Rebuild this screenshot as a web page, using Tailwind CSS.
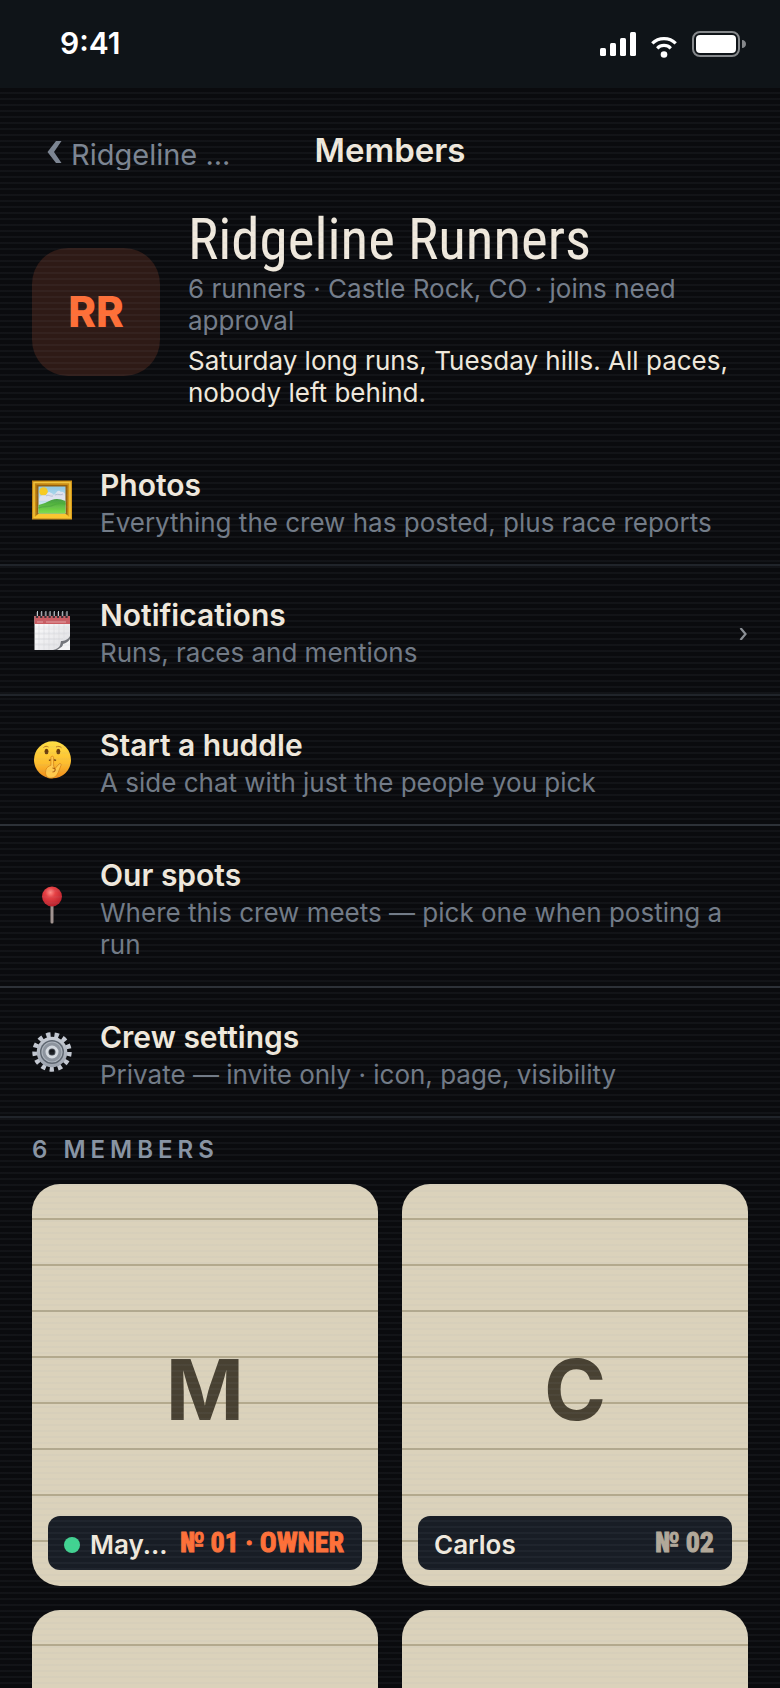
<!DOCTYPE html>
<html lang="en">
<head>
<meta charset="utf-8">
<meta name="viewport" content="width=device-width, initial-scale=1">
<title>Members</title>
<script src="https://cdn.jsdelivr.net/npm/@tailwindcss/browser@4"></script>
</head>
<body class="flex h-screen flex-col overflow-hidden bg-[#0a0b0e] font-['Inter',sans-serif] text-[#f0e9dd]">

<div class="flex h-[88px] shrink-0 items-center justify-between bg-[#0f1418] pl-[60px] pr-[34px] text-white">
  <span class="pb-0.5 text-[30px] font-semibold leading-9">9:41</span>
  <svg class="h-7 w-[146px]" viewBox="0 0 146 28" fill="none" aria-label="Signal, Wi-Fi and battery">
    <g fill="#fff">
      <rect x="0" y="18" width="6" height="8" rx="1.5"/>
      <rect x="10" y="13" width="6" height="13" rx="1.5"/>
      <rect x="20" y="8" width="6" height="18" rx="1.5"/>
      <rect x="30" y="2" width="6" height="24" rx="1.5"/>
      <circle cx="64" cy="24.5" r="3.3"/>
    </g>
    <path d="M52.3 13.4C58.5 7 69.500 7 75.700 13.400M57.200 18.300C61 14.500 67 14.500 70.800 18.300" stroke="#fff" stroke-width="3.200"/>
    <rect x="93" y="2" width="46" height="24" rx="7" stroke="#85888b" stroke-width="2"/>
    <rect x="96" y="5" width="40" height="18" rx="4" fill="#fff"/>
    <path d="M142 10c2.500 0 4 2 4 4s-1.500 4-4 4z" fill="#85888b"/>
  </svg>
</div>

<div class="relative min-h-0 flex-1">
  <div class="h-full overflow-y-auto [scrollbar-width:none]">

    <nav class="grid grid-cols-[1fr_auto_1fr] items-center px-11 pt-[42px]">
      <a href="#" class="flex h-10 w-[200px] items-end gap-2 text-[#7c8592]">
        <svg class="mb-[7px] ml-[3px] h-[22px] w-4 shrink-0" viewBox="0 0 16 22" fill="currentColor" aria-hidden="true"><path d="M9 0h5.500L7 11l7.500 11H9L.500 11z"/></svg>
        <span class="h-8 overflow-hidden text-[29px] leading-[34px]">Ridgeline ...</span>
      </a>
      <h1 class="text-[33px] font-semibold leading-10">Members</h1>
    </nav>

    <header class="flex items-center gap-7 px-8 pb-[27px] pt-10">
      <div class="mt-1 flex size-32 shrink-0 items-center justify-center rounded-[36px] bg-[#2e1a16] text-[42px] font-extrabold text-[#ff6f37]">RR</div>
      <div class="min-w-0 flex-1">
        <h2 class="mb-[3px] font-['Roboto_Condensed','Liberation_Sans',sans-serif] text-[57px] leading-[60px]">Ridgeline Runners</h2>
        <p class="text-[26px] leading-8 text-[#747d8a]">6 runners · Castle Rock, CO · joins need approval</p>
        <p class="mt-2 text-[26px] leading-8">Saturday long runs, Tuesday hills. All paces, nobody left behind.</p>
      </div>
    </header>

    <ul>
      <li>
        <a href="#" class="flex items-center gap-7 border-b-2 border-[#20242a] px-8 py-[25px]">
          <svg class="size-10 shrink-0" viewBox="0 0 40 40" aria-hidden="true">
            <defs>
              <linearGradient id="sky" x2="0" y2="1"><stop stop-color="#8fc9e6"/><stop offset="1" stop-color="#eef4f6"/></linearGradient>
              <linearGradient id="grass" x2="0" y2="1"><stop stop-color="#3f9d3c"/><stop offset="1" stop-color="#7fe04b"/></linearGradient>
              <linearGradient id="gold" x2="1" y2="1"><stop stop-color="#b97c10"/><stop offset="1" stop-color="#e0a019"/></linearGradient>
            </defs>
            <rect y=".5" width="40" height="39" fill="url(#gold)"/>
            <rect x="2" y="2.500" width="36" height="35" fill="none" stroke="#f5c63a" stroke-width="1.500"/>
            <rect x="4.500" y="5" width="31" height="30" fill="#94600f"/>
            <path d="M2 38 6 34h28l4 4z" fill="#f9c630"/>
            <rect x="6.500" y="6.500" width="27" height="27" fill="url(#sky)"/>
            <circle cx="11.500" cy="11.500" r="4.300" fill="#f7cb22"/>
            <path d="M8 17c2-3 5-1 6-2s2-5 5-2c2 0 2 3 4 1s3-5 6-2c2-1 3 1 4 2v7H7z" fill="#dfe3ef"/>
            <path d="M14 16c3-2 4 1 7 0M23 15c3-2 5 1 8-1" stroke="#b9c0d8" fill="none"/>
            <path d="M6.500 25c5-1 8-3 13-5 5-2 9-1 14 1v12.500h-27z" fill="url(#grass)"/>
            <path d="M6.500 28c6-3 11 0 15-3 4-2 8-2 12-1" stroke="#4fae3e" stroke-width="1.300" fill="none"/>
          </svg>
          <span class="min-w-0 flex-1 pt-1">
            <span class="block text-[30px] font-semibold leading-10">Photos</span>
            <span class="mt-0.5 block text-[26px] leading-8 text-[#717a86]">Everything the crew has posted, plus race reports</span>
          </span>
        </a>
      </li>
      <li>
        <a href="#" class="flex items-center gap-7 border-b-2 border-[#20242a] px-8 py-[25px]">
          <svg class="size-10 shrink-0" viewBox="0 0 40 40" aria-hidden="true">
            <defs><linearGradient id="paper" x2="1" y2="1"><stop stop-color="#fff"/><stop offset="1" stop-color="#dedee2"/></linearGradient></defs>
            <path d="M2.500 6H38v34H2.500z" fill="url(#paper)"/>
            <path d="M2.500 6H38v8H2.500z" fill="#c95c62"/>
            <path d="M5 12h6M14 12h20" stroke="#e7a1a3" stroke-width="1.200"/>
            <path d="M7 14v26M12 14v26M17 14v26M22 14v24M27 14v20M32 14v14M3 19h34M3 24h32M3 29h28M3 34h22" stroke="#dddde0" stroke-width=".7"/>
            <path d="M21 40c8-2 7-5 8-9 3 0 7-1 9-5v14z" fill="#74767b"/>
            <path d="M25 40c5-3 6-4 6-6 3-1 5-2 7-5v11z" fill="#f4f4f5"/>
            <path d="M5 2v6M9.200 2v6M13.400 2v6M17.600 2v6M21.800 2v6M26 2v6M30.200 2v6M34.500 2v6" stroke="#3d343a" stroke-width="2.200"/>
            <path d="M5.500 1v5M9.700 1v5M13.900 1v5M18.100 1v5M22.300 1v5M26.500 1v5M30.700 1v5M35 1v5" stroke="#bdc9cd"/>
          </svg>
          <span class="min-w-0 flex-1 pt-1">
            <span class="block text-[30px] font-semibold leading-10">Notifications</span>
            <span class="mt-0.5 block text-[26px] leading-8 text-[#717a86]">Runs, races and mentions</span>
          </span>
          <svg class="mt-2 h-3 w-[10px] shrink-0" viewBox="0 0 10 12" fill="none" aria-hidden="true"><path d="m2.500 0 5 6-5 6" stroke="#8b8f95" stroke-width="2.200"/></svg>
        </a>
      </li>
      <li>
        <a href="#" class="flex items-center gap-7 border-b-2 border-[#262a30] px-8 py-[25px]">
          <svg class="size-10 shrink-0" viewBox="0 0 40 40" aria-hidden="true">
            <defs><linearGradient id="face" x2="0" y2="1"><stop stop-color="#ffdf45"/><stop offset=".6" stop-color="#fdbd2e"/><stop offset="1" stop-color="#ef8b1b"/></linearGradient></defs>
            <circle cx="20.500" cy="19.800" r="18.500" fill="url(#face)"/>
            <ellipse cx="14.500" cy="11.500" rx="2" ry="2.700" fill="#6b3d0c"/>
            <ellipse cx="26.300" cy="11.500" rx="2" ry="2.700" fill="#6b3d0c"/>
            <path d="M11.500 7.500c1.500-1.500 3.500-1.500 5-.5M24 7c2-1 4-.8 5.500.8" stroke="#c07a18" fill="none"/>
            <path d="M17 20.500c1-1 6-1 7 0" stroke="#7a430c" stroke-width="1.300" fill="none"/>
            <path d="M18.900 17.500c0-1.800 2.700-1.800 2.700 0V26l1.400 2.500 4-4.500c1.300-1.200 2.600 0 2 1.300l-3 7.700c-2 4-5 5.500-8.500 5-4-.5-4.500-5-3.500-8.500.5-2 3-3.500 4.900-4.200z" fill="#ffc94d" stroke="#dd8a1a" stroke-width=".9"/>
            <path d="M20.500 28c2 0 3 1 2.600 2.400-.3 1-1.500 1.600-2.600 1.600" stroke="#a85c0c" stroke-width="1.100" fill="none"/>
          </svg>
          <span class="min-w-0 flex-1 pt-1">
            <span class="block text-[30px] font-semibold leading-10">Start a huddle</span>
            <span class="mt-0.5 block text-[26px] leading-8 text-[#717a86]">A side chat with just the people you pick</span>
          </span>
        </a>
      </li>
      <li>
        <a href="#" class="flex items-center gap-7 border-b-2 border-[#262a30] px-8 py-[25px]">
          <svg class="size-10 shrink-0" viewBox="0 0 40 40" aria-hidden="true">
            <defs>
              <radialGradient id="pin" cx=".42" cy=".3" r=".7"><stop stop-color="#ff8e88"/><stop offset=".35" stop-color="#e64145"/><stop offset="1" stop-color="#b8202b"/></radialGradient>
              <linearGradient id="needle"><stop stop-color="#6e625f"/><stop offset=".5" stop-color="#b5a7a3"/><stop offset="1" stop-color="#6e625f"/></linearGradient>
            </defs>
            <rect x="18.300" y="18" width="3.400" height="19.500" rx="1.500" fill="url(#needle)"/>
            <circle cx="20" cy="10.500" r="10" fill="url(#pin)"/>
          </svg>
          <span class="min-w-0 flex-1 pt-1">
            <span class="block text-[30px] font-semibold leading-10">Our spots</span>
            <span class="mt-0.5 block text-[26px] leading-8 text-[#717a86]">Where this crew meets — pick one when posting a run</span>
          </span>
        </a>
      </li>
      <li>
        <a href="#" class="flex items-center gap-7 border-b-2 border-[#20242a] px-8 py-[25px]">
          <svg class="size-10 shrink-0" viewBox="0 0 40 40" aria-hidden="true">
            <defs><linearGradient id="steel" x2="0" y2="1"><stop stop-color="#c9ced6"/><stop offset="1" stop-color="#9ba2ad"/></linearGradient></defs>
            <circle cx="20" cy="20" r="17.200" fill="none" stroke="#c3c8d1" stroke-width="5" stroke-dasharray="4.300 4.006"/>
            <circle cx="20" cy="20" r="15.300" fill="url(#steel)"/>
            <circle cx="20" cy="20" r="12" fill="#5e6670"/>
            <circle cx="20" cy="20" r="10" fill="#8d949e" stroke="#adb4bd" stroke-width="1.200"/>
            <circle cx="20" cy="20" r="5" fill="#40464e" stroke="#d5dae0" stroke-width="3"/>
            <circle cx="20" cy="20" r="2.500" fill="#15181c"/>
          </svg>
          <span class="min-w-0 flex-1 pt-1">
            <span class="block text-[30px] font-semibold leading-10">Crew settings</span>
            <span class="mt-0.5 block text-[26px] leading-8 text-[#717a86]">Private — invite only · icon, page, visibility</span>
          </span>
        </a>
      </li>
    </ul>

    <section class="px-8 pb-8">
      <h3 class="pb-[18px] pt-4 text-2xl font-semibold tracking-[5px] text-[#8894a3]">6 MEMBERS</h3>
      <div class="grid grid-cols-2 gap-6">
        <article class="relative flex aspect-[346/402] items-center justify-center overflow-hidden rounded-[28px] bg-[#dbd2bb] bg-[repeating-linear-gradient(0deg,transparent_0_44px,#b3a98d_44px_46px)]">
          <span class="pt-[10px] text-[84px] font-bold leading-none text-[#484132]">M</span>
          <div class="absolute inset-x-4 bottom-4 flex h-[54px] items-center rounded-xl bg-[#181d25] px-4">
            <span class="mr-[10px] mt-1 size-4 shrink-0 rounded-full bg-[#40d391]"></span>
            <span class="min-w-0 flex-1 pt-1 text-[26px] font-semibold leading-8">May...</span>
            <span class="shrink-0 whitespace-nowrap pr-0.5 font-['Roboto_Condensed','Liberation_Sans',sans-serif] text-[28px] font-bold leading-8 text-[#ff7038] [-webkit-text-stroke:1px]">№ 01 · OWNER</span>
          </div>
        </article>
        <article class="relative flex aspect-[346/402] items-center justify-center overflow-hidden rounded-[28px] bg-[#dbd2bb] bg-[repeating-linear-gradient(0deg,transparent_0_44px,#b3a98d_44px_46px)]">
          <span class="pt-[10px] text-[84px] font-bold leading-none text-[#484132]">C</span>
          <div class="absolute inset-x-4 bottom-4 flex h-[54px] items-center rounded-xl bg-[#181d25] px-4">
            <span class="min-w-0 flex-1 pt-1 text-[26px] font-semibold leading-8">Carlos</span>
            <span class="shrink-0 whitespace-nowrap pr-0.5 font-['Roboto_Condensed','Liberation_Sans',sans-serif] text-[28px] font-bold leading-8 text-[#b3a999] [-webkit-text-stroke:1px]">№ 02</span>
          </div>
        </article>
        <article class="aspect-[346/402] rounded-[28px] bg-[#dbd2bb] bg-[repeating-linear-gradient(0deg,transparent_0_44px,#b3a98d_44px_46px)]"></article>
        <article class="aspect-[346/402] rounded-[28px] bg-[#dbd2bb] bg-[repeating-linear-gradient(0deg,transparent_0_44px,#b3a98d_44px_46px)]"></article>
      </div>
    </section>
  </div>

  <!-- Scanline texture over the whole screen body -->
  <div class="pointer-events-none absolute inset-0 bg-[repeating-linear-gradient(180deg,transparent_0_4px,rgb(150_160_175/0.06)_4px_6px)]"></div>
</div>
</body>
</html>
